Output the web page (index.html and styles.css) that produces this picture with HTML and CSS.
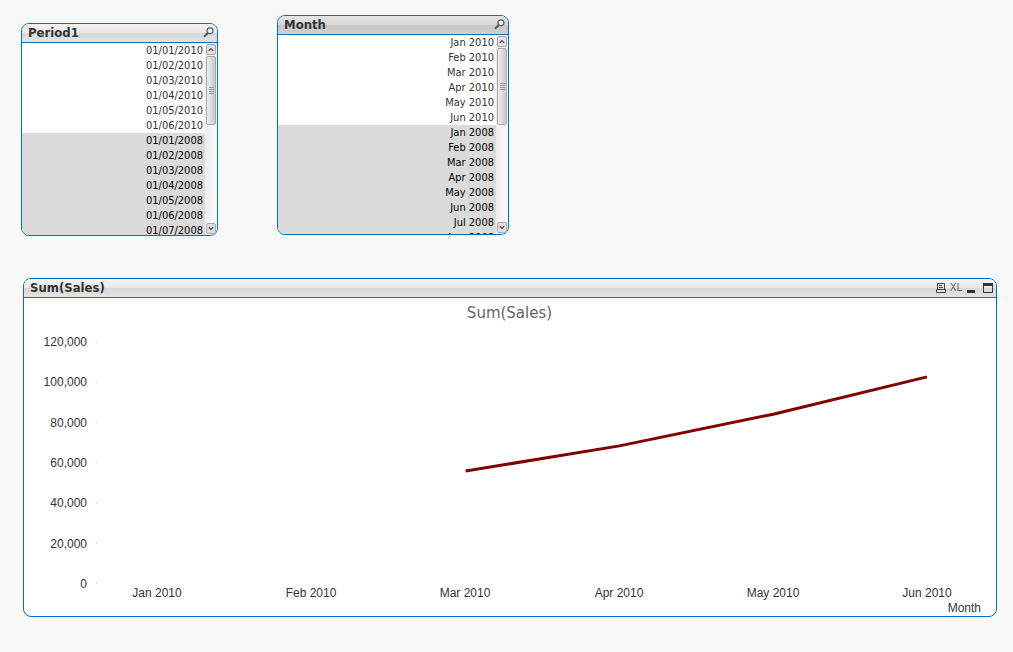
FILE: index.html
```html
<!DOCTYPE html>
<html lang="en">
<head>
<meta charset="utf-8">
<meta name="viewport" content="width=device-width, initial-scale=1">
<title>Sum(Sales)</title>
<link rel="stylesheet" href="styles.css">
</head>
<body>
<svg class="defs" aria-hidden="true">
  <symbol id="search" viewBox="0 0 11 11"><circle cx="7" cy="3.8" r="3" fill="#f4f4f4" stroke="#555" stroke-width="1.2"/><path d="M4.8 6 L1 9.8" stroke="#555" stroke-width="2" fill="none"/></symbol>
  <symbol id="up" viewBox="0 0 9 9"><path d="M2 6 L4.5 3.5 L7 6" fill="none" stroke="#6b3038" stroke-width="1.2"/></symbol>
  <symbol id="down" viewBox="0 0 9 9"><path d="M2 3 L4.5 5.5 L7 3" fill="none" stroke="#6b3038" stroke-width="1.2"/></symbol>
</svg>
<main class="sheet">
  <div class="filters">
    <section class="panel period">
      <header class="caption"><h2>Period1</h2><button class="icon" aria-label="Search Period1"><svg width="11" height="11"><use href="#search"/></svg></button></header>
      <div class="listbox">
        <ul class="items">
          <li><button>01/01/2010</button></li>
          <li><button>01/02/2010</button></li>
          <li><button>01/03/2010</button></li>
          <li><button>01/04/2010</button></li>
          <li><button>01/05/2010</button></li>
          <li><button>01/06/2010</button></li>
          <li class="excluded"><button>01/01/2008</button></li>
          <li class="excluded"><button>01/02/2008</button></li>
          <li class="excluded"><button>01/03/2008</button></li>
          <li class="excluded"><button>01/04/2008</button></li>
          <li class="excluded"><button>01/05/2008</button></li>
          <li class="excluded"><button>01/06/2008</button></li>
          <li class="excluded"><button>01/07/2008</button></li>
        </ul>
        <div class="scrollbar">
          <button class="arrow" aria-label="Scroll up"><svg width="9" height="9"><use href="#up"/></svg></button>
          <div class="track"><div class="thumb short"><i></i></div></div>
          <button class="arrow" aria-label="Scroll down"><svg width="9" height="9"><use href="#down"/></svg></button>
        </div>
      </div>
    </section>
    <section class="panel month">
      <header class="caption dark"><h2>Month</h2><button class="icon" aria-label="Search Month"><svg width="11" height="11"><use href="#search"/></svg></button></header>
      <div class="listbox tall">
        <ul class="items">
          <li><button>Jan 2010</button></li>
          <li><button>Feb 2010</button></li>
          <li><button>Mar 2010</button></li>
          <li><button>Apr 2010</button></li>
          <li><button>May 2010</button></li>
          <li><button>Jun 2010</button></li>
          <li class="excluded"><button>Jan 2008</button></li>
          <li class="excluded"><button>Feb 2008</button></li>
          <li class="excluded"><button>Mar 2008</button></li>
          <li class="excluded"><button>Apr 2008</button></li>
          <li class="excluded"><button>May 2008</button></li>
          <li class="excluded"><button>Jun 2008</button></li>
          <li class="excluded"><button>Jul 2008</button></li>
          <li class="excluded"><button>Aug 2008</button></li>
        </ul>
        <div class="scrollbar">
          <button class="arrow" aria-label="Scroll up"><svg width="9" height="9"><use href="#up"/></svg></button>
          <div class="track"><div class="thumb"><i></i></div></div>
          <button class="arrow" aria-label="Scroll down"><svg width="9" height="9"><use href="#down"/></svg></button>
        </div>
      </div>
    </section>
  </div>
  <section class="panel chart">
    <header class="caption">
      <h2>Sum(Sales)</h2>
      <div class="tools">
        <button class="icon" aria-label="Print"><svg width="10" height="10" viewBox="0 0 10 10"><path d="M1.5 6V.5H8.5V6M.5 6.5H9.5V9.5H.5ZM3 2.5H6M3 4.5H7" fill="none" stroke="#444"/></svg></button>
        <button class="icon xl">XL</button>
        <button class="icon minimize" aria-label="Minimize"><svg width="10" height="10" viewBox="0 0 10 10"><path d="M1 7H9V10H1Z" fill="#333"/></svg></button>
        <button class="icon" aria-label="Maximize"><svg width="10" height="10" viewBox="0 0 10 10"><path d="M.5 1V9.5H9.5V1" fill="none" stroke="#333"/><path d="M0 0H10V3H0Z" fill="#333"/></svg></button>
      </div>
    </header>
    <div class="chart-body">
      <h3>Sum(Sales)</h3>
      <div class="graph">
        <div class="y-axis"><span>120,000</span><span>100,000</span><span>80,000</span><span>60,000</span><span>40,000</span><span>20,000</span><span>0</span></div>
        <svg class="plot" viewBox="0 0 500 120" preserveAspectRatio="none" role="img" aria-label="Sum of sales by month"><polyline points="200,64 300,51.5 400,35.8 500,17.3"/></svg>
      </div>
      <div class="x-axis"><span>Jan 2010</span><span>Feb 2010</span><span>Mar 2010</span><span>Apr 2010</span><span>May 2010</span><span>Jun 2010</span></div>
      <div class="x-title">Month</div>
    </div>
  </section>
</main>
</body>
</html>
```
FILE: styles.css
```css
* { box-sizing: border-box; }
body { margin: 0; background: #f8f8f8; color: #333; font: 12px "Liberation Sans", Arial, sans-serif; }
h2, h3, ul { margin: 0; padding: 0; }
button { border: 0; padding: 0; background: none; color: inherit; font: inherit; }
svg { display: block; }
.defs { position: absolute; width: 0; height: 0; }

.sheet { display: flex; flex-direction: column; min-height: 100vh; padding: 15px 16px 35px 23px; gap: 42px; }
.filters { display: flex; align-items: flex-start; gap: 59px; margin-left: -2px; }
.panel { border: 1px solid #0070c0; border-radius: 8px; background: #fff; overflow: hidden; }
.period { width: 197px; margin-top: 8px; }
.month { width: 232px; }

.caption { display: flex; align-items: center; justify-content: space-between; height: 19px; padding: 0 3px 0 6px; border-bottom: 1px solid #0070c0; background: linear-gradient(#f4f4f4, #e8e8e8 48%, #d8d8d8 52%, #e4e4e4); }
.caption.dark { background: linear-gradient(#e4e4e4, #d8d8d8 48%, #c6c6c6 52%, #d0d0d0); }
.caption h2 { font: bold 13px/16px "DejaVu Sans Condensed", "DejaVu Sans", sans-serif; }
.caption .icon { padding-bottom: 2px; }
.tools { display: flex; align-items: center; gap: 4px; }
.tools .xl { padding: 0; font: 11px/14px "DejaVu Sans Condensed", sans-serif; color: #666; }
.tools .icon:not(.xl) { padding: 0; }
.minimize { margin-right: 3px; }

.listbox { display: flex; height: 192px; }
.listbox.tall { height: 199px; }
.items { flex: 1; overflow: hidden; list-style: none; font: 11px/15px "DejaVu Sans Condensed", "DejaVu Sans", sans-serif; }
.items button { display: block; width: 100%; height: 15px; padding-right: 2px; text-align: right; }
.excluded { background: #dbdbdb; color: #000; }

.scrollbar { display: flex; flex-direction: column; width: 12px; padding: 1px; gap: 1px; background: linear-gradient(90deg, #eee, #fafafa); }
.arrow { display: flex; align-items: center; justify-content: center; height: 11px; border: 1px solid #aaa; border-radius: 2px; background: #e0e0e0; }
.track { flex: 1; }
.thumb { display: flex; align-items: center; justify-content: center; height: 77px; border: 1px solid #aaa; border-radius: 2px; background: linear-gradient(90deg, #eee, #c8c8c8); }
.thumb.short { height: 69px; }
.thumb i { width: 5px; height: 7px; background: repeating-linear-gradient(#999 0 1px, transparent 1px 2px); }

.chart { display: flex; flex-direction: column; flex: 1; }
.chart-body { display: flex; flex-direction: column; flex: 1; padding: 5px 15px 0 18px; }
.chart-body h3 { padding-right: 4px; color: #666; font: 15px/20px "DejaVu Sans", sans-serif; text-align: center; }
.graph { display: flex; flex: 1; margin-top: 12px; padding-right: 54px; }
.y-axis { display: flex; flex-direction: column; justify-content: space-between; width: 55px; line-height: 14px; text-align: right; }
.y-axis span { display: flex; align-items: center; justify-content: flex-end; gap: 9px; }
.y-axis span::after { content: ""; width: 1px; height: 1px; background: #ccc; }
.plot { flex: 1; width: 0; height: auto; margin: 7px 0 7px 61px; overflow: visible; }
.plot polyline { fill: none; stroke: #800000; stroke-width: 3; vector-effect: non-scaling-stroke; }
.x-axis { display: flex; justify-content: space-between; margin-top: -5px; padding: 0 24px 0 85px; line-height: 14px; }
.x-axis span { width: 60px; text-align: center; white-space: nowrap; }
.x-title { text-align: right; line-height: 16px; }
```
